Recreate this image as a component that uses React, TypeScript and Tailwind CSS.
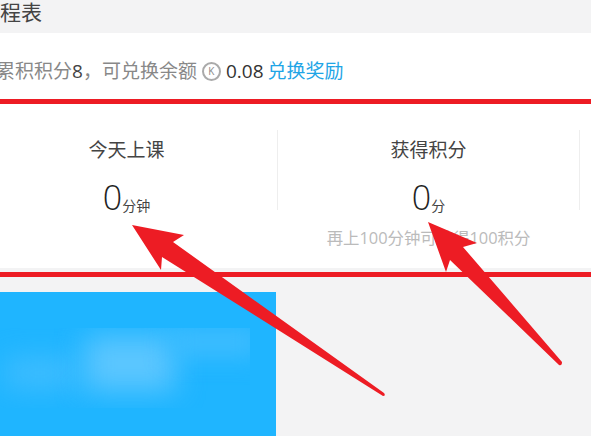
const CJK = "font-['Open_Sans','Noto_Sans_CJK_SC',sans-serif]";

function Arrows() {
  return (
    <svg className="absolute left-0 top-0" width="591" height="436" viewBox="0 0 591 436" fill="#ed1c24">
      <path d="M132 225 L184 235 L173 242 L384 393 Q386 396 383 396 L162 257 L161 270 Z" />
      <path d="M428 222 L477 243 L463 247 L562 362 Q562 366 559 365 L450 260 L446 272 Z" />
    </svg>
  );
}

function Stat({ title, value, unit, hint }: { title: string; value: string; unit: string; hint?: string }) {
  return (
    <div className="flex h-[80px] w-[302px] shrink-0 flex-col items-center border-r border-[#eeeeee]">
      <p className="mt-[6px] text-[19px] leading-[28px] text-[#444]">{title}</p>
      <p className="mt-[13px] flex items-end leading-[40px] text-[#222]">
        <span className="text-[34px] leading-[40px] font-light">{value}</span>
        <span className="mb-[3px] text-[14px] leading-[16px] text-[#444]">{unit}</span>
      </p>
      {hint && <p className="mt-[9px] text-[16.4px] leading-[24px] whitespace-nowrap text-[#bbbbbb]">{hint}</p>}
    </div>
  );
}

export default function App() {
  return (
    <div className={`relative h-[436px] w-[591px] overflow-hidden bg-[#f3f3f4] ${CJK}`}>
      {/* header */}
      <div className="flex h-[33px] items-center">
        <h1 className="-ml-[21px] -mt-[9px] text-[21px] leading-[28px] whitespace-nowrap text-[#444]">课程表</h1>
      </div>

      {/* points */}
      <div className="flex h-[66px] items-center bg-white pt-[10px]">
        <p className="-ml-[4px] flex items-center text-[19px] whitespace-nowrap text-[#888]">
          累积积分<span className="text-[#444]">8</span>，可兑换余额
          <span className="mx-[5px] flex h-[19px] w-[19px] items-center justify-center rounded-full border-2 border-[#aaa] text-[10px] text-[#888]">K</span>
          <span className="text-[#333]">0.08</span>
          <a className="ml-[4px] text-[#1fa5e6]">兑换奖励</a>
        </p>
      </div>
      <div className="h-[5px] bg-[#ed1c24]" />

      {/* stats */}
      <div className="flex h-[164px] bg-white pt-[26px]">
        <div className="-ml-[24px] flex">
          <Stat title="今天上课" value="0" unit="分钟" />
          <Stat title="获得积分" value="0" unit="分" hint="再上100分钟可获得100积分" />
        </div>
      </div>
      <div className="mt-[4px] h-[5px] bg-[#ed1c24]" />

      {/* blurred card */}
      <div className="relative mt-[15px] h-[150px] w-[276px] overflow-hidden bg-[#1fb5ff]">
        <div className="absolute left-0 top-[36px] h-[80px] w-[250px] overflow-hidden">
          <div className="absolute left-[5px] top-[30px] h-[30px] w-[70px] bg-[#40bdff] blur-[14px]" />
          <div className="absolute left-[85px] top-[8px] h-[55px] w-[90px] bg-[#5cc6ff] blur-[14px]" />
          <div className="absolute left-[170px] top-0 h-[28px] w-[90px] bg-[#40bdff] blur-[12px]" />
        </div>
      </div>

      <Arrows />
    </div>
  );
}
